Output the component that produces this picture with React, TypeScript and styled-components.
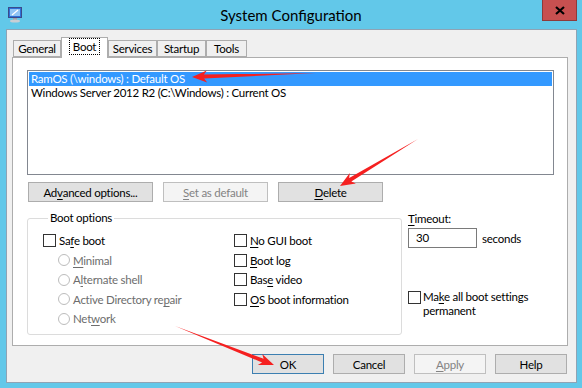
import styled, { createGlobalStyle } from 'styled-components';

const GlobalStyle = createGlobalStyle`
  html, body {
    margin: 0;
    padding: 0;
  }
  body {
    font-family: Lato, "Noto Sans", sans-serif;
    font-size: 11.5px;
    letter-spacing: -0.25px;
    color: #000;
  }
`;

const Window = styled.div`
  position: relative;
  width: 582px;
  height: 388px;
  background-color: #62c8e9;
  display: flex;
  flex-direction: column;
  overflow: hidden;
`;

const TitleBar = styled.div`
  height: 29px;
  display: grid;
  grid-template-columns: 1fr auto 1fr;
  align-items: start;
`;

const IconBox = styled.div`
  padding: 6px 0 0 7px;
`;

const Title = styled.div`
  font-size: 15px;
  line-height: 15px;
  letter-spacing: 0;
  padding-top: 8px;
  color: #000;
`;

const CloseButton = styled.div`
  justify-self: end;
  margin-right: 5px;
  width: 33px;
  height: 20px;
  background-color: #c75050;
  border: 1px solid #8e3a3a;
  border-top: none;
  display: flex;
  align-items: center;
  justify-content: center;
`;

const Client = styled.div`
  flex: 1;
  margin: 0 5px 5px 6px;
  background-color: #f0f0f0;
  border: 1px solid #8fa3b4;
  padding: 7px 8px 8px 5px;
  display: flex;
  flex-direction: column;
`;

const TabStrip = styled.div`
  display: flex;
  align-items: flex-end;
  height: 20px;
  padding-left: 1px;
  position: relative;
  z-index: 1;
`;

const Tab = styled.div<{ $width: number; $active?: boolean }>`
  width: ${p => p.$width}px;
  height: ${p => (p.$active ? '21px' : '17px')};
  margin-bottom: ${p => (p.$active ? '-1px' : '0')};
  background-color: ${p => (p.$active ? '#fff' : '#f0f0f0')};
  border: 1px solid #adadad;
  border-bottom: ${p => (p.$active ? 'none' : '1px solid #adadad')};
  display: flex;
  justify-content: center;
  align-items: ${p => (p.$active ? 'flex-start' : 'center')};
  box-sizing: border-box;
  flex-shrink: 0;
`;

const FocusLabel = styled.span`
  outline: 1px dotted #000;
  padding: 0 3px;
  margin-top: 1px;
  line-height: 15px;
`;

const Panel = styled.div`
  height: 289px;
  box-sizing: border-box;
  background-color: #fff;
  border: 1px solid #adadad;
  padding: 12px 13px 0 14px;
  display: flex;
  flex-direction: column;
`;

const ListBox = styled.div`
  height: 105px;
  box-sizing: border-box;
  border: 1px solid #828790;
  padding: 1px;
`;

const ListRow = styled.div<{ $selected?: boolean }>`
  height: 14px;
  line-height: 14px;
  padding-left: 2px;
  background-color: ${p => (p.$selected ? '#3399ff' : 'transparent')};
  color: ${p => (p.$selected ? '#fff' : '#000')};
  white-space: nowrap;
`;

const ButtonRow = styled.div`
  display: flex;
  gap: 10px;
  margin-top: 7px;
  padding-left: 1px;
`;

const Button = styled.div<{ $width: number; $disabled?: boolean; $default?: boolean }>`
  width: ${p => p.$width}px;
  height: 20px;
  box-sizing: border-box;
  background-color: ${p => (p.$disabled ? '#f4f4f4' : '#e1e1e1')};
  border: 1px solid ${p => (p.$disabled ? '#bfbfbf' : p.$default ? '#3c7fb1' : '#adadad')};
  color: ${p => (p.$disabled ? '#838383' : '#000')};
  display: flex;
  align-items: center;
  justify-content: center;
  white-space: nowrap;
`;

const Lower = styled.div`
  display: flex;
  margin-top: 9px;
`;

const GroupBox = styled.fieldset`
  width: 375px;
  height: 124px;
  flex-shrink: 0;
  box-sizing: border-box;
  margin: 0;
  border: 1px solid #dcdcdc;
  border-radius: 3px;
  padding: 6px 0 0 15px;
  display: grid;
  grid-template-columns: 191px 1fr;
  grid-template-rows: repeat(5, 19.5px);
  grid-auto-flow: column;
  align-content: start;
`;

const Legend = styled.legend`
  padding: 0 2px;
  margin-left: 5px;
  line-height: 14px;
`;

const OptionRow = styled.label<{ $disabled?: boolean; $indent?: boolean }>`
  display: flex;
  align-items: center;
  gap: 3px;
  padding-left: ${p => (p.$indent ? '15px' : '0')};
  color: ${p => (p.$disabled ? '#6d6d6d' : '#000')};
  white-space: nowrap;
`;

const Check = styled.span`
  width: 13px;
  height: 13px;
  box-sizing: border-box;
  border: 1px solid #333;
  background-color: #fff;
  flex-shrink: 0;
`;

const Radio = styled.span`
  width: 12px;
  height: 12px;
  box-sizing: border-box;
  border: 1px solid #bcbcbc;
  border-radius: 50%;
  background-color: #fff;
  flex-shrink: 0;
`;

const SideColumn = styled.div`
  display: flex;
  flex-direction: column;
  margin-left: 6px;
  padding-top: 1px;
`;

const TimeoutRow = styled.div`
  display: flex;
  align-items: center;
  gap: 5px;
  margin-top: 3px;
`;

const TextBox = styled.div`
  width: 69px;
  height: 20px;
  box-sizing: border-box;
  border: 1px solid #7a7a7a;
  background-color: #fff;
  padding-left: 7px;
  line-height: 18px;
`;

const PermanentRow = styled.label`
  display: flex;
  align-items: flex-start;
  gap: 2px;
  margin-top: 42px;
  line-height: 14px;
`;

const PermanentText = styled.span`
  display: flex;
  flex-direction: column;
  white-space: nowrap;
`;

const CheckTop = styled(Check)`
  margin-top: 1px;
`;

const Footer = styled.div`
  display: flex;
  justify-content: flex-end;
  gap: 9px;
  margin-top: 8px;
  padding-right: 1px;
`;

const U = styled.u`
  text-underline-offset: 2px;
`;

const Overlay = styled.svg`
  position: absolute;
  left: 0;
  top: 0;
  pointer-events: none;
`;

function arrowPoints(tx: number, ty: number, hx: number, hy: number) {
  const dx = hx - tx;
  const dy = hy - ty;
  const len = Math.hypot(dx, dy);
  const ux = dx / len;
  const uy = dy / len;
  const nx = -uy;
  const ny = ux;
  const headLen = 15;
  const headW = 6;
  const shaftW = 2;
  const bx = hx - ux * headLen;
  const by = hy - uy * headLen;
  const nb = (w: number, x: number, y: number) => [x + nx * w, y + ny * w];
  const pts = [
    [tx, ty],
    nb(shaftW, bx + ux * 3, by + uy * 3),
    nb(headW, bx, by),
    [hx, hy],
    nb(-headW, bx, by),
    nb(-shaftW, bx + ux * 3, by + uy * 3),
  ];
  return pts.map(p => `${p[0].toFixed(1)},${p[1].toFixed(1)}`).join(' ');
}

const arrows = [
  { tx: 316, ty: 73, hx: 192, hy: 77 },
  { tx: 418, ty: 139, hx: 340, hy: 186 },
  { tx: 175, ty: 326, hx: 274, hy: 365 },
];

const MonitorIcon = () => (
  <svg width="17" height="17" viewBox="0 0 17 17">
    <rect x="1.5" y="1.5" width="13" height="10" fill="#2f6fd6" stroke="#3a4c8c" />
    <rect x="3" y="3" width="10" height="7" fill="#8fc4f5" />
    <path d="M5 9 L11 4" stroke="#fff" strokeWidth="1.2" />
    <rect x="6" y="12" width="4" height="2" fill="#9aa0a8" />
    <ellipse cx="8" cy="15" rx="5" ry="1.5" fill="#c9ced4" />
  </svg>
);

export default function App() {
  return (
    <>
      <GlobalStyle />
      <Window>
        <TitleBar>
          <IconBox>
            <MonitorIcon />
          </IconBox>
          <Title>System Configuration</Title>
          <CloseButton>
            <svg width="10" height="9" viewBox="0 0 10 9">
              <path d="M1 1 L9 8 M9 1 L1 8" stroke="#000" strokeWidth="2.2" />
            </svg>
          </CloseButton>
        </TitleBar>
        <Client>
          <TabStrip>
            <Tab $width={48}>General</Tab>
            <Tab $width={47} $active>
              <FocusLabel>Boot</FocusLabel>
            </Tab>
            <Tab $width={49}>Services</Tab>
            <Tab $width={49}>Startup</Tab>
            <Tab $width={41}>Tools</Tab>
          </TabStrip>
          <Panel>
            <ListBox>
              <ListRow $selected>RamOS (\windows) : Default OS</ListRow>
              <ListRow>Windows Server 2012 R2 (C:\Windows) : Current OS</ListRow>
            </ListBox>
            <ButtonRow>
              <Button $width={125}>
                Ad<U>v</U>anced options...
              </Button>
              <Button $width={105} $disabled>
                <U>S</U>et as default
              </Button>
              <Button $width={105}>
                <U>D</U>elete
              </Button>
            </ButtonRow>
            <Lower>
              <GroupBox>
                <Legend>Boot options</Legend>
                <OptionRow>
                  <Check />
                  <span>
                    Sa<U>f</U>e boot
                  </span>
                </OptionRow>
                <OptionRow $disabled $indent>
                  <Radio />
                  <span>
                    <U>M</U>inimal
                  </span>
                </OptionRow>
                <OptionRow $disabled $indent>
                  <Radio />
                  <span>
                    A<U>l</U>ternate shell
                  </span>
                </OptionRow>
                <OptionRow $disabled $indent>
                  <Radio />
                  <span>
                    Active Directory re<U>p</U>air
                  </span>
                </OptionRow>
                <OptionRow $disabled $indent>
                  <Radio />
                  <span>
                    Net<U>w</U>ork
                  </span>
                </OptionRow>
                <OptionRow>
                  <Check />
                  <span>
                    <U>N</U>o GUI boot
                  </span>
                </OptionRow>
                <OptionRow>
                  <Check />
                  <span>
                    <U>B</U>oot log
                  </span>
                </OptionRow>
                <OptionRow>
                  <Check />
                  <span>
                    Bas<U>e</U> video
                  </span>
                </OptionRow>
                <OptionRow>
                  <Check />
                  <span>
                    <U>O</U>S boot information
                  </span>
                </OptionRow>
              </GroupBox>
              <SideColumn>
                <span>
                  <U>T</U>imeout:
                </span>
                <TimeoutRow>
                  <TextBox>30</TextBox>
                  <span>seconds</span>
                </TimeoutRow>
                <PermanentRow>
                  <CheckTop />
                  <PermanentText>
                    <span>
                      Ma<U>k</U>e all boot settings
                    </span>
                    <span>permanent</span>
                  </PermanentText>
                </PermanentRow>
              </SideColumn>
            </Lower>
          </Panel>
          <Footer>
            <Button $width={72} $default>
              OK
            </Button>
            <Button $width={72}>Cancel</Button>
            <Button $width={72} $disabled>
              <U>A</U>pply
            </Button>
            <Button $width={72}>Help</Button>
          </Footer>
        </Client>
        <Overlay width="582" height="388" viewBox="0 0 582 388">
          {arrows.map((a, i) => (
            <polygon key={i} points={arrowPoints(a.tx, a.ty, a.hx, a.hy)} fill="#f52020" />
          ))}
        </Overlay>
      </Window>
    </>
  );
}
